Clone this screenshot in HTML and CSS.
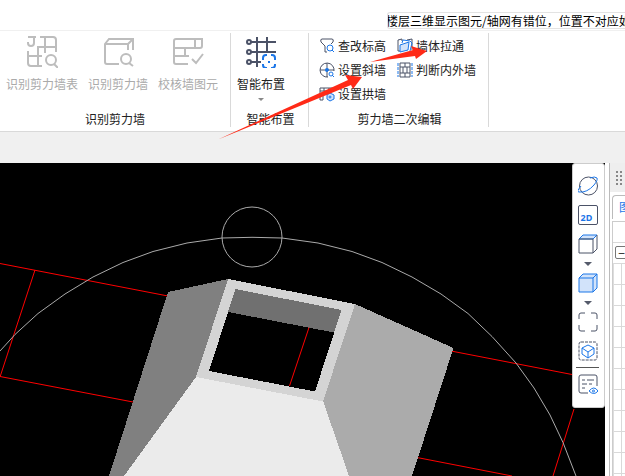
FILE: index.html
```
<!DOCTYPE html>
<html lang="zh-CN">
<head>
<meta charset="utf-8">
<title>剪力墙</title>
<link rel="stylesheet" href="styles.css">
</head>
<body>
<header class="topbar"><p class="notice">楼层三维显示图元/轴网有错位，位置不对应如</p></header>
<nav class="ribbon">
  <section class="group recognise">
    <div class="tools">
      <button class="big off" disabled><svg class="icon-l" viewBox="0 0 32 32"><path d="M2 1h8M8 1v6q0 3-3 3T2 7V6M14 1h13q3 0 3 3v12M19 1v16M11 11h19M12 11v19M2 15v12q0 3 3 3h11M2 20h14"/><circle cx="25" cy="24" r="5"/><path d="M28 28l4 4"/></svg><span>识别剪力墙表</span></button>
      <button class="big off" disabled><svg class="icon-l" viewBox="0 0 32 32"><path d="M17 28H5q-2 0-2-2V8l4-5h24v11M3 8h23v6M26 8l5-5"/><circle cx="24" cy="23" r="5"/><path d="M27 27l4 3"/></svg><span>识别剪力墙</span></button>
      <button class="big off" disabled><svg class="icon-l" viewBox="0 0 32 32"><path d="M16 28H4q-2 0-2-2V5q0-2 2-2h26v7q0 2-2 2H2M23 3v9M13 12v8M2 20h15"/><path d="M20 23l4 4 7-9"/></svg><span>校核墙图元</span></button>
    </div>
    <h2>识别剪力墙</h2>
  </section>
  <section class="group arrange">
    <div class="tools">
      <button class="big"><svg class="icon-l" viewBox="0 0 32 32"><path d="M4 6h27M4 16h27M4 26h12M12 1v30M22 1v15"/><g fill="#fff"><circle cx="4" cy="6" r="2"/><circle cx="4" cy="16" r="2"/><circle cx="4" cy="26" r="2"/></g><rect class="gap" x="16" y="18" width="16" height="14"/><path class="blue" d="M18 24v-2q0-3 3-3h1M26 19h1q3 0 3 3v2M30 28v1q0 3-3 3h-1M22 32h-1q-3 0-3-3v-1M24 25v2"/></svg><span>智能布置</span><i class="caret"></i></button>
    </div>
    <h2>智能布置</h2>
  </section>
  <section class="group edit">
    <div class="commands">
      <button><svg class="icon-s" viewBox="0 0 16 16"><path d="M8 14H6V8L2 4q-1-3 1-3h10q2 0 1 3l-2 2"/><g class="blue"><circle cx="11" cy="10" r="3"/><path d="M13 12l2 2"/></g></svg>查改标高</button>
      <button><svg class="icon-s" viewBox="0 0 16 16"><path d="M3 13H1V2l4-1v2M10 2l5-1v11"/><path class="blue fill" d="M3 7l9-3-1 8-8 2z"/><path class="blue" d="M5 5l1-3 7 1 2 2-2 8"/></svg>墙体拉通</button>
      <button><svg class="icon-s" viewBox="0 0 16 16"><path d="M9 15A7 7 0 1 1 15 9M8 1v14M1 8h14"/><circle class="dot" cx="8" cy="8" r="2"/><rect class="gap" x="9" y="9" width="7" height="7"/><g class="blue"><circle cx="12" cy="12" r="2"/><path d="M13 13l2 2"/></g></svg>设置斜墙</button>
      <button><svg class="icon-s" viewBox="0 0 16 16"><path d="M3 1h10v14H3zM3 5h10M3 11h10M6 5v6M10 5v6M8 1v4M8 11v4"/><path class="blue dash" d="M1 1v14M15 1v14"/></svg>判断内外墙</button>
      <button><svg class="icon-s" viewBox="0 0 16 16"><path d="M4 14H1V2h13v4M1 5h13M5 2v3M10 2v3M4 14V9q1-3 4-3"/><g class="blue"><path class="fill" d="M11 7l4 2v4l-4 2-3-2V9z"/><circle cx="11" cy="11" r="1"/></g></svg>设置拱墙</button>
    </div>
    <h2>剪力墙二次编辑</h2>
  </section>
</nav>
<div class="strip"></div>
<main>
  <div class="view">
    <svg class="scene" viewBox="0 163 605 313" preserveAspectRatio="xMinYMin slice">
      <path class="axis" d="M0 263.500L168 296M35 270L0 377M0 376.500L133 402M451 351L572 374.500M574 409L553 476M417 457.500L512 476"/>
      <circle class="orbit" cx="252" cy="237" r="30"/>
      <path class="orbit" d="M0 351L15 334.500L38 313.500L65 294L93 277L123 262.500L153 251.500L187 243L222 238L252 237.300L282 238L318 243L352 251.500L382 262.500L412 277L441 294L468 313.500L492 336.500L516 363L534 388L550 415L563 442.500L576 476"/>
      <g shape-rendering="crispEdges">
      <path fill="#808080" d="M168 292L228 279L196 377L124 476H109z"/>
      <path fill="#ababab" d="M355 304L453.500 348L412 476H349L323 401z"/>
      <path fill="#ebebeb" d="M196 377L323 401L349 476H124z"/>
      <path fill="#d4d4d4" d="M228 279L355 304L323 401.500L196 377z"/>
      <path d="M235.500 289L341.500 310L315 391.500L209 371z"/>
      <path fill="#707070" d="M235.500 289L341.500 310L334 332.500L228 312z"/>
      </g>
      <path class="axis" d="M309 327.500L289.500 386"/>
    </svg>
    <div class="viewtools">
      <button aria-label="动态观察"><svg viewBox="0 0 20 20"><circle cx="10.500" cy="10" r="9"/><path class="blue" d="M3 10q-5 6-2 6 8 1 15-7 4-5 3-7-2-2-7 0"/></svg></button>
      <button class="flat">2D</button>
      <button aria-label="视图方向"><svg viewBox="0 0 20 20"><path class="blue fill" d="M1 5l4-4h14l-4 4z"/><path d="M1 5h14v14H1zM19 1v14l-4 4"/></svg></button>
      <i class="caret"></i>
      <button aria-label="实体显示"><svg viewBox="0 0 20 20"><path class="blue fill" d="M1 5l4-4h14v14l-4 4H1zM1 5h14v14M15 5l4-4"/></svg></button>
      <i class="caret"></i>
      <button aria-label="全屏"><svg viewBox="0 0 20 20"><path d="M1 7V3q0-2 2-2h4M13 1h4q2 0 2 2v4M19 13v4q0 2-2 2h-4M7 19H3q-2 0-2-2v-4"/></svg></button>
      <button aria-label="局部三维"><svg viewBox="0 0 20 20"><rect class="dash" x="1" y="1" width="18" height="18" rx="2"/><path class="blue" d="M10 4l6 3v6l-6 4-6-4V7zM4 7l6 4 6-4M10 11v6"/></svg></button>
      <hr>
      <button aria-label="显示设置"><svg viewBox="0 0 20 20"><path d="M10 19H3q-2 0-2-2V3q0-2 2-2h14q2 0 2 2v9M4 6h3M9 6h7M4 10h5M11 10h3M4 14h3"/><path class="blue" d="M11 17q5-6 9 0-4 5-9 0z"/><circle class="blue" cx="15.500" cy="17" r="1"/></svg></button>
    </div>
  </div>
  <aside class="panel">
    <div class="grip"><svg viewBox="0 0 8 16"><path d="M1 1h2v2H1zM5 1h2v2H5zM1 5h2v2H1zM5 5h2v2H5zM1 9h2v2H1zM5 9h2v2H5zM1 13h2v2H1zM5 13h2v2H5z"/></svg></div>
    <div class="tab">图</div>
    <div class="list"><div class="head"></div><div class="row"><button class="fold" aria-label="折叠">−</button></div><div class="rows"></div></div>
  </aside>
</main>
<svg class="arrows" viewBox="0 0 625 160"><path d="M218 139.500L348 80L345 75L362 77L353 89L351 85Z"/><path d="M370 62L413 50L411 46L427 51L416 59L415 56Z"/></svg>
</body>
</html>
```

FILE: styles.css
```
* { box-sizing: border-box; }
body {
  margin: 0;
  height: 100vh;
  display: flex;
  flex-direction: column;
  overflow: hidden;
  position: relative;
  background: #fff;
  color: #222;
  font: 12px/16px "Noto Sans CJK SC", sans-serif;
}
button {
  padding: 0;
  border: 0;
  background: none;
  color: inherit;
  font: inherit;
}
h2, p { margin: 0; font: inherit; }
svg { display: block; fill: none; stroke: #4b5267; }
.blue { stroke: #1b76e8; }
.fill { fill: #d2e3fa; }
.gap { fill: #fff; stroke: none; }
.dot { fill: #1b76e8; stroke: none; }
.dash { stroke-dasharray: 3 1; }

.topbar {
  height: 31px;
  flex: none;
  padding: 12px 0 0 387px;
  border-bottom: 1px solid #f0f0f0;
}
.notice {
  height: 17px;
  border: 1px solid #e3e3e3;
  border-right: 0;
  border-radius: 3px 0 0 3px;
  overflow: hidden;
  white-space: nowrap;
  text-indent: -2px;
  line-height: 15px;
  color: #000;
}

.ribbon {
  display: flex;
  flex: none;
  height: 101px;
  padding: 2px 0 4px;
  border-bottom: 1px solid #d9d9d9;
}
.group {
  display: flex;
  flex-direction: column;
  justify-content: space-between;
  border-right: 1px solid #d9d9d9;
}
.group h2 { text-align: center; }
.tools { display: flex; gap: 10px; }
.recognise { width: 231px; padding-left: 6px; }
.recognise h2 { padding-right: 6px; }
.arrange { width: 78px; }
.arrange .tools { padding-left: 6px; }
.arrange h2 { padding-left: 2px; }
.edit { width: 180px; padding-left: 10px; }
.edit h2 { padding-right: 8px; }
.big {
  display: flex;
  flex-direction: column;
  align-items: center;
  padding-top: 3px;
}
.big span { margin-top: 8px; }
.icon-l { width: 32px; height: 32px; stroke-width: 2; }
.off { color: #aaa; }
.off svg { stroke: #bdbdbd; }
.caret {
  border: solid transparent;
  border-width: 4px 4px 0;
  border-top-color: #555b6b;
}
.big .caret { margin-top: 6px; border-width: 3px 3px 0; border-top-color: #888; }
.commands {
  display: grid;
  grid-template-columns: 78px 1fr;
  grid-auto-rows: 24px;
  padding-top: 1px;
}
.commands button {
  display: flex;
  align-items: center;
  gap: 3px;
  white-space: nowrap;
}
.icon-s { width: 16px; height: 16px; }

.strip { height: 31px; flex: none; background: #f0f0f0; }
main { display: flex; flex: 1; min-height: 0; }
.view { position: relative; flex: 1; min-width: 0; background: #000; }
.scene { width: 100%; height: 100%; stroke: none; fill: #000; }
.axis { fill: none; stroke: #f00; }
.orbit { fill: none; stroke: #aaa; }
.viewtools {
  position: absolute;
  top: 0;
  right: 0;
  width: 33px;
  padding: 12px 2px 13px 0;
  display: flex;
  flex-direction: column;
  align-items: center;
  gap: 9px;
  background: #fff;
  border: 1px solid #ccc;
  border-radius: 3px;
}
.viewtools svg { width: 20px; height: 20px; stroke-width: 1; }
.viewtools .caret { margin: -1px 0 -2px; }
.viewtools hr { width: 23px; margin: -3px 0; border: 0; border-top: 1px solid #555; }
.flat {
  width: 20px;
  height: 20px;
  padding: 5px 0 0 2px;
  border: 1px solid #4b5267;
  border-radius: 2px;
  color: #1b76e8;
  font: bold 9px/14px "Noto Sans", sans-serif;
  text-align: left;
}

.panel {
  width: 16px;
  flex: none;
  margin-left: 4px;
  display: flex;
  flex-direction: column;
  overflow: hidden;
  border-left: 1px solid #bbb;
}
.grip { height: 29px; padding: 7px 0 0 5px; background: #eee; flex: none; }
.grip svg { width: 8px; height: 16px; fill: #888; stroke: none; }
.tab {
  height: 24px;
  margin: 3px 0 2px 2px;
  padding: 3px 0 0 6px;
  flex: none;
  border: 1px solid #bbb;
  border-width: 1px 0 0 1px;
  border-radius: 4px 0 0;
  color: #1b76e8;
}
.list {
  display: flex;
  flex: 1;
  flex-direction: column;
  margin-left: 2px;
  border: 1px solid #ccc;
  border-width: 1px 0 0 1px;
}
.head { height: 21px; flex: none; border-bottom: 1px solid #d9d9d9; }
.row { height: 20px; flex: none; padding: 3px 0 0 2px; }
.fold {
  display: block;
  width: 13px;
  height: 13px;
  border: 1px solid #777;
  border-radius: 2px;
  line-height: 10px;
}
.rows {
  flex: 1;
  border-left: 1px solid #ddd;
  background:
    linear-gradient(90deg, transparent 7px, #d9d9d9 7px 8px, transparent 8px),
    repeating-linear-gradient(#d9d9d9 0 1px, #fff 1px 21px);
}
.arrows {
  position: absolute;
  top: 0;
  left: 0;
  width: 625px;
  height: 160px;
  fill: #ff2a17;
  stroke: none;
  pointer-events: none;
}
```
